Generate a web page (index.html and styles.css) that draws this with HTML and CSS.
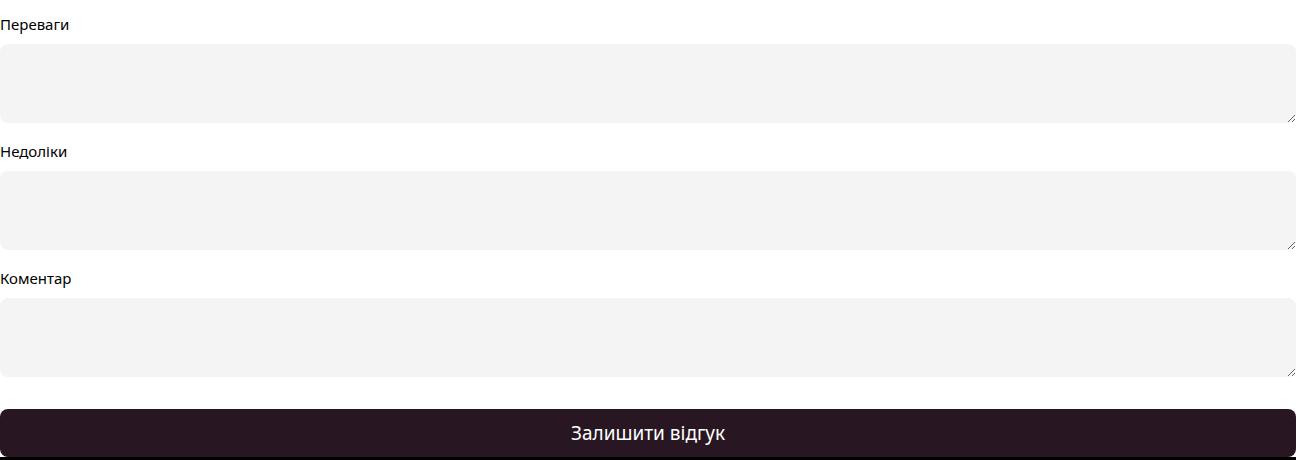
FILE: index.html
```html
<!DOCTYPE html>
<html lang="uk">
<head>
  <meta charset="UTF-8" />
  <title>Відгук</title>
  <link rel="stylesheet" href="styles.css">
</head>
<body>
  <form class="review-form">
    <label for="pros">Переваги</label>
    <textarea id="pros" name="pros"></textarea>

    <label for="cons">Недоліки</label>
    <textarea id="cons" name="cons"></textarea>

    <label for="comment">Коментар</label>
    <textarea id="comment" name="comment"></textarea>

    <button type="submit">Залишити відгук</button>
  </form>
  <div class="page-edge"></div>
</body>
</html>
```

FILE: styles.css
```css
body {
  font-family: 'Noto Sans', sans-serif;
  background-color: #fff;
  color: #000;
  margin: 0;
  padding: 0;
}
.review-form {
  display: flex;
  flex-direction: column;
  padding-top: 14px;
}
label {
  display: block;
  font-size: 15px;
  line-height: 20px;
  margin-bottom: 10px;
}
textarea {
  display: block;
  box-sizing: border-box;
  width: 100%;
  height: 79px;
  margin: 0 0 18px;
  padding: 10px 12px;
  border: none;
  border-radius: 8px;
  background: #f4f4f4;
  font-family: inherit;
  font-size: 15px;
  resize: vertical;
}
textarea:last-of-type {
  margin-bottom: 32px;
}
button {
  height: 48px;
  width: 100%;
  border: none;
  border-radius: 8px;
  background-color: #281722;
  color: #fff;
  font-family: inherit;
  font-size: 19px;
  cursor: pointer;
}
.page-edge {
  height: 3px;
  background: #000;
}
```
